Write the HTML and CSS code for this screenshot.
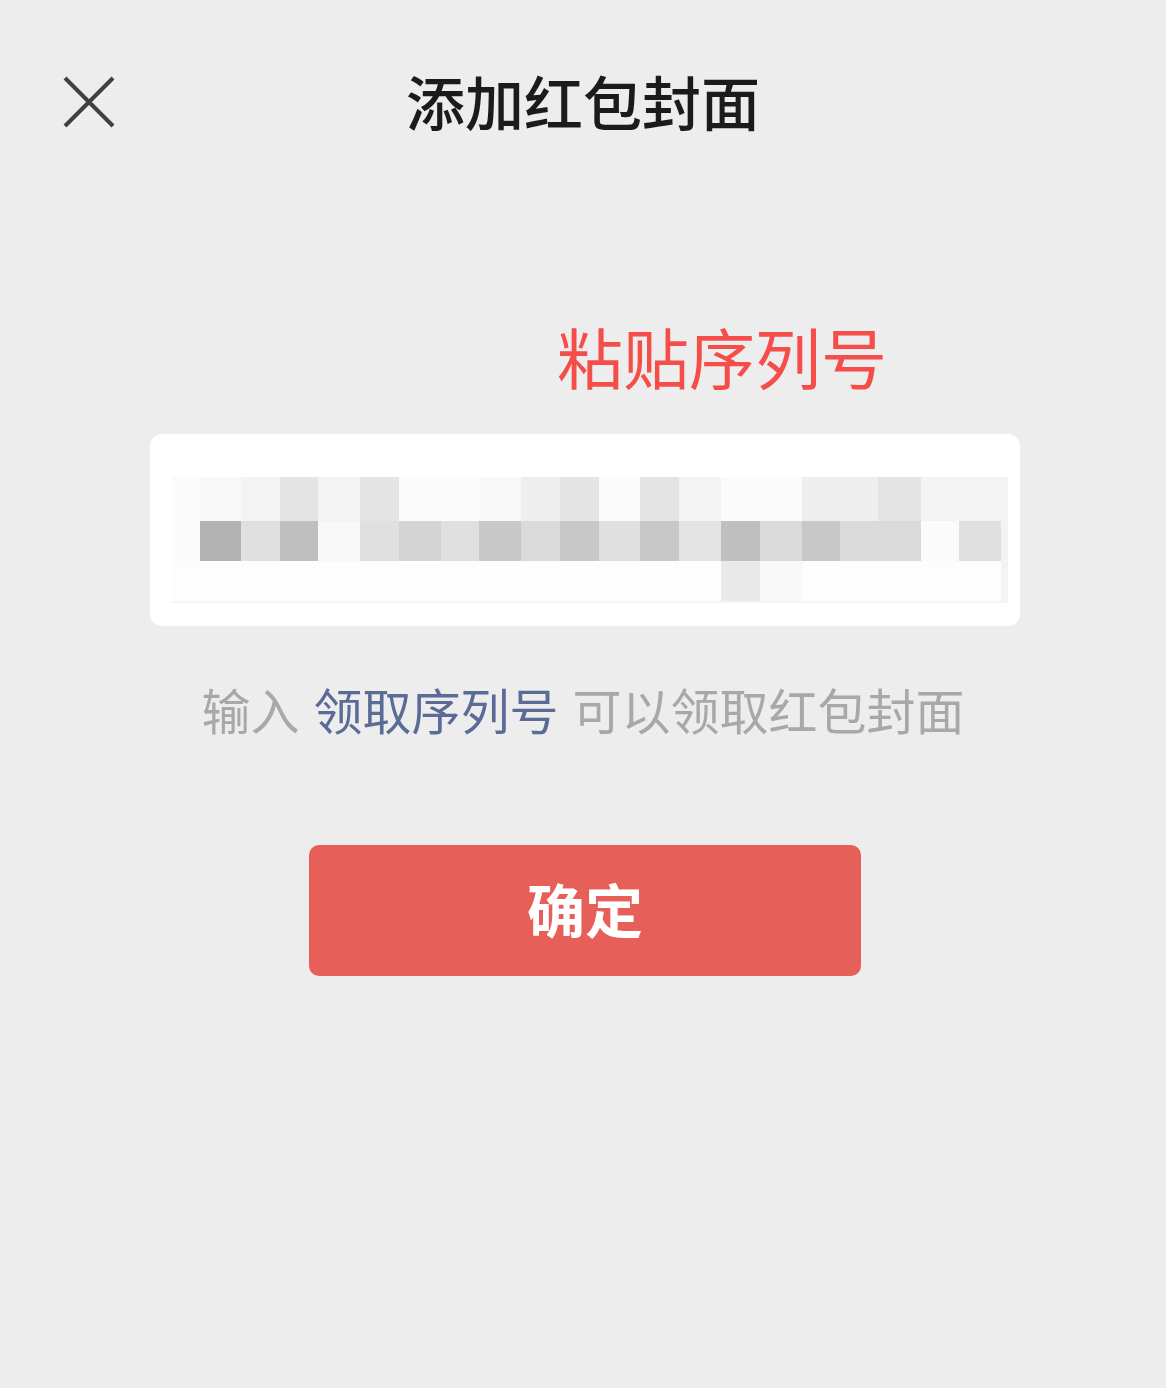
FILE: index.html
```html
<!DOCTYPE html>
<html lang="zh-CN">
<head>
<meta charset="utf-8">
<title>添加红包封面</title>
<link rel="stylesheet" href="styles.css">
</head>
<body>
<div class="page">
  <header class="header">
    <div class="close">
      <svg width="52" height="52" viewBox="0 0 52 52" aria-hidden="true">
        <path d="M2 2 L50 50 M50 2 L2 50" stroke="#3f3f3f" stroke-width="4" stroke-linecap="butt" fill="none"/>
      </svg>
    </div>
    <h1 class="title">添加红包封面</h1>
    <div></div>
  </header>

  <div class="annot">粘贴序列号</div>

  <div class="card">
    <div class="mosaic">
      <i class="a"></i><i class="b"></i><i class="c"></i><i class="e"></i><i class="c"></i><i class="e"></i><i class="a"></i><i class="a"></i><i class="b"></i><i class="d"></i><i class="e"></i><i class="a"></i><i class="e"></i><i class="c"></i><i class="a"></i><i class="a"></i><i class="d"></i><i class="d"></i><i class="e"></i><i class="c"></i><i class="c"></i><i class="c"></i>
      <i class="a"></i><i class="k"></i><i class="f"></i><i class="j"></i><i class="b"></i><i class="f"></i><i class="h"></i><i class="f"></i><i class="i"></i><i class="g"></i><i class="i"></i><i class="f"></i><i class="i"></i><i class="e"></i><i class="j"></i><i class="g"></i><i class="i"></i><i class="g"></i><i class="g"></i><i class="a"></i><i class="f"></i><i class="c"></i>
      <i class="w"></i><i class="w"></i><i class="w"></i><i class="w"></i><i class="w"></i><i class="w"></i><i class="w"></i><i class="w"></i><i class="w"></i><i class="w"></i><i class="w"></i><i class="w"></i><i class="w"></i><i class="w"></i><i class="d2"></i><i class="b"></i><i class="w"></i><i class="w"></i><i class="w"></i><i class="w"></i><i class="w"></i><i class="c"></i>
    </div>
    <div class="mosaic-edge"></div>
  </div>

  <p class="hint">输入<span class="link">领取序列号</span>可以领取红包封面</p>

  <button class="confirm" type="button">确定</button>
</div>
</body>
</html>
```

FILE: styles.css
```css
* {
  box-sizing: border-box;
}

html, body {
  margin: 0;
  padding: 0;
  background: #ededed;
}

body {
  font-family: "Noto Sans CJK SC", "Noto Sans", sans-serif;
  width: 1166px;
  height: 1388px;
  overflow: hidden;
}

.page {
  display: flex;
  flex-direction: column;
}

.header {
  height: 208px;
  display: grid;
  grid-template-columns: 1fr auto 1fr;
  align-items: start;
  padding-top: 71px;
}

.close {
  padding-left: 63px;
  padding-top: 5px;
  line-height: 0;
}

.title {
  margin: 0;
  font-size: 59px;
  line-height: 59px;
  font-weight: 500;
  color: #1b1b1b;
  letter-spacing: 0;
}

.annot {
  margin-top: 114px;
  padding-left: 557px;
  font-size: 66px;
  line-height: 66px;
  color: #f54e4a;
}

.card {
  margin-top: 46px;
  margin-left: 150px;
  width: 870px;
  height: 192px;
  background: #ffffff;
  border-radius: 12px;
  padding: 43px 12px 0 22px;
}

.mosaic {
  display: grid;
  grid-template-columns: 28px 41px 39px 38px 42px 39px 42px 38px 42px 39px 39px 41px 39px 42px 39px 42px 38px 38px 43px 38px 42px 7px;
  grid-template-rows: 44px 40px 40px;
}

.mosaic i {
  display: block;
}

.mosaic-edge {
  width: 836px;
  height: 2px;
  background: #f4f4f4;
}

.a { background: #fbfbfb; }
.b { background: #f8f8f8; }
.c { background: #f3f3f3; }
.d { background: #eeeeee; }
.d2 { background: #e9e9e9; }
.e { background: #e4e4e4; }
.f { background: #e0e0e0; }
.g { background: #dadada; }
.h { background: #d4d4d4; }
.i { background: #c8c8c8; }
.j { background: #bfbfbf; }
.k { background: #b2b2b2; }
.w { background: #fdfdfd; }

.hint {
  margin: 58px 0 0;
  text-align: center;
  font-size: 49px;
  line-height: 49px;
  color: #a8a8a8;
}

.link {
  color: #5a6b96;
  margin: 0 14px;
}

.confirm {
  margin-top: 112px;
  margin-left: 309px;
  width: 552px;
  height: 131px;
  border: none;
  border-radius: 10px;
  background: #e65f59;
  color: #ffffff;
  font-family: "Noto Sans CJK SC", "Noto Sans", sans-serif;
  font-size: 58px;
  font-weight: 700;
  line-height: 58px;
  padding: 0 0 6px;
  display: flex;
  align-items: center;
  justify-content: center;
}
```
